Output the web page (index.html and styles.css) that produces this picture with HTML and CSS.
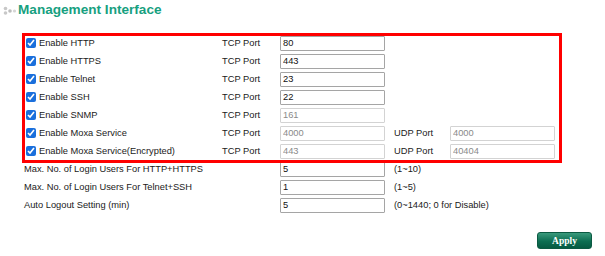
FILE: index.html
```html
<!DOCTYPE html>
<html lang="en">
<head>
  <meta charset="UTF-8" />
  <title>Management Interface</title>
  <link rel="stylesheet" href="styles.css">
</head>
<body>

  <h2 class="title">
    <svg class="bullet" width="14" height="10" viewBox="0 0 14 10">
      <circle cx="2.5" cy="2.5" r="1.8" fill="#c8c8c8"/>
      <circle cx="2.5" cy="7" r="1.8" fill="#c8c8c8"/>
      <circle cx="7" cy="5" r="1.8" fill="#bdbdbd"/>
      <circle cx="11.5" cy="5" r="1.6" fill="#d6d6d6"/>
    </svg>
    Management Interface
  </h2>

  <div class="settings">
    <div class="highlight"></div>

    <div class="row">
      <label class="name"><input type="checkbox" checked>Enable HTTP</label>
      <span class="port">TCP Port</span>
      <input class="field" type="text" value="80">
    </div>
    <div class="row">
      <label class="name"><input type="checkbox" checked>Enable HTTPS</label>
      <span class="port">TCP Port</span>
      <input class="field" type="text" value="443">
    </div>
    <div class="row">
      <label class="name"><input type="checkbox" checked>Enable Telnet</label>
      <span class="port">TCP Port</span>
      <input class="field" type="text" value="23">
    </div>
    <div class="row">
      <label class="name"><input type="checkbox" checked>Enable SSH</label>
      <span class="port">TCP Port</span>
      <input class="field" type="text" value="22">
    </div>
    <div class="row">
      <label class="name"><input type="checkbox" checked>Enable SNMP</label>
      <span class="port">TCP Port</span>
      <input class="field off" type="text" value="161" disabled>
    </div>
    <div class="row">
      <label class="name"><input type="checkbox" checked>Enable Moxa Service</label>
      <span class="port">TCP Port</span>
      <input class="field off" type="text" value="4000" disabled>
      <span class="port">UDP Port</span>
      <input class="field off" type="text" value="4000" disabled>
    </div>
    <div class="row">
      <label class="name"><input type="checkbox" checked>Enable Moxa Service(Encrypted)</label>
      <span class="port">TCP Port</span>
      <input class="field off" type="text" value="443" disabled>
      <span class="port">UDP Port</span>
      <input class="field off" type="text" value="40404" disabled>
    </div>

    <div class="row">
      <span class="name wide">Max. No. of Login Users For HTTP+HTTPS</span>
      <input class="field" type="text" value="5">
      <span class="hint">(1~10)</span>
    </div>
    <div class="row">
      <span class="name wide">Max. No. of Login Users For Telnet+SSH</span>
      <input class="field" type="text" value="1">
      <span class="hint">(1~5)</span>
    </div>
    <div class="row">
      <span class="name wide">Auto Logout Setting (min)</span>
      <input class="field" type="text" value="5">
      <span class="hint">(0~1440; 0 for Disable)</span>
    </div>
  </div>

  <div class="actions">
    <button class="apply">Apply</button>
  </div>

</body>
</html>
```

FILE: styles.css
```css
body {
  margin: 0;
  font-family: "Liberation Sans", Arial, sans-serif;
  font-size: 9.3px;
  color: #1a1a1a;
  background: #fff;
}

.title {
  display: flex;
  align-items: center;
  margin: 2px 0 0;
  padding-left: 3px;
  height: 16px;
  line-height: 16px;
  font-size: 13.6px;
  font-weight: bold;
  color: #17a07f;
}

.bullet {
  margin-right: 1px;
  margin-top: 1px;
}

/* settings table */
.settings {
  position: relative;
  margin-top: 16px;
  padding-left: 24px;
}

.highlight {
  position: absolute;
  left: 22px;
  top: -1px;
  width: 540px;
  height: 130px;
  box-sizing: border-box;
  border: 3px solid #ff0000;
  pointer-events: none;
}

.row {
  display: grid;
  grid-template-columns: 198px 58px 114px 56px 104px;
  align-items: center;
  height: 18px;
}

.name {
  display: flex;
  align-items: center;
  gap: 3px;
  white-space: nowrap;
}

.name input {
  width: 10px;
  height: 10px;
  margin: 0 0 0 2px;
  accent-color: #1a6fdc;
}

.name.wide {
  grid-column: 1 / span 2;
}

.hint {
  grid-column: 4 / span 2;
  white-space: nowrap;
}

.field {
  box-sizing: border-box;
  width: 105px;
  height: 15px;
  margin: 0;
  padding: 0 2px;
  border: 1px solid #a5a5a5;
  border-radius: 1px;
  font-family: inherit;
  font-size: 9.3px;
  color: #111;
  background: #fff;
}

.field.off {
  border-color: #d3d3d3;
  color: #8a8a8a;
  background: #fff;
}

/* apply button */
.actions {
  display: flex;
  justify-content: flex-end;
  margin-top: 18px;
  padding-right: 13px;
}

.apply {
  width: 55px;
  height: 17px;
  padding: 0;
  border: 1px solid #0b5a42;
  border-radius: 3px;
  background: linear-gradient(to bottom, #3a9a7c, #0d6e52 55%, #075a42);
  color: #fff;
  font-family: "Liberation Serif", "Times New Roman", serif;
  font-weight: bold;
  font-size: 9.5px;
  cursor: pointer;
}
```
